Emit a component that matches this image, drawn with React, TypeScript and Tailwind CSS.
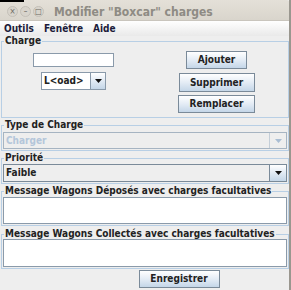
import * as React from "react";

const Arrow: React.FC<{ disabled?: boolean }> = ({ disabled }) => (
    <svg width="7" height="4" viewBox="0 0 7 4">
        <path d="M0 0h7L3.5 4z" fill={disabled ? "#a9bdd3" : "#111"} />
    </svg>
);

const Btn: React.FC<{ label: string; className: string }> = ({ label, className }) => (
    <button
        className={`flex shrink-0 items-center justify-center border border-[#7a8a99] bg-gradient-to-b from-white via-[#e4ecf5] to-[#c4d6e8] text-[10px] font-bold text-[#222] leading-none ${className}`}
    >
        {label}
    </button>
);

const Group: React.FC<{ title: string; className: string; children: React.ReactNode }> = ({ title, className, children }) => (
    <fieldset className={`mx-[1px] w-[288px] shrink-0 border border-[#b8cfe5] ${className}`}>
        <legend className="ml-[2px] whitespace-nowrap px-[1px] text-[10px] leading-[10px] font-bold text-[#222]">
            {title}
        </legend>
        {children}
    </fieldset>
);

export default function App() {
    return (
        <div className="relative flex h-[290px] w-[291px] flex-col overflow-hidden bg-[#eeeeee] font-['DejaVu_Sans_Condensed','DejaVu_Sans',sans-serif]">
            {/* window title bar */}
            <div className="relative flex h-[21px] shrink-0 items-center rounded-tr-[5px] border-b border-[#c9c5bd] bg-gradient-to-b from-[#e4e0d8] to-[#d9d5cc]">
                <div className="absolute left-0 top-0 h-[2px] w-[24px] bg-black" />
                <div className="ml-[7px] mt-[3px] flex gap-[2px]">
                    {["×", "–", "□"].map((g) => (
                        <div
                            key={g}
                            className="flex h-[11px] w-[11px] items-center justify-center rounded-full border border-[#c4c0b8] bg-[#d8d4cc] text-[8px] leading-none text-[#6a675f]"
                        >
                            {g}
                        </div>
                    ))}
                </div>
                <span className="ml-[10px] mt-[3px] text-[12px] font-bold text-[#8e8b84]">
                    Modifier "Boxcar" charges
                </span>
            </div>

            {/* menu bar */}
            <div className="flex h-[15px] shrink-0 items-center gap-[10px] bg-gradient-to-b from-white to-[#e9e9e9] pl-[4px] text-[10px] font-bold text-[#1c1c3a]">
                <span>Outils</span>
                <span>Fenêtre</span>
                <span>Aide</span>
            </div>

            <Group title="Charge" className="h-[82px]">
                <div className="grid grid-cols-2">
                    <div className="flex flex-col items-center pt-[7px]">
                        <div className="h-[14px] w-[81px] border border-[#8a9aaa] bg-white" />
                        <div className="mt-[5px] flex h-[18px] w-[65px] border border-[#8a9aaa] bg-white">
                            <span className="flex-1 pl-[2px] text-[10px] leading-[16px] font-bold text-[#222]">L&lt;oad&gt;</span>
                            <div className="flex w-[15px] items-center justify-center border-l border-[#8a9aaa] bg-gradient-to-b from-white to-[#c4d6e8]">
                                <Arrow />
                            </div>
                        </div>
                    </div>
                    <div className="flex flex-col items-center pt-[5px]">
                        <Btn label="Ajouter" className="h-[18px] w-[61px]" />
                        <Btn label="Supprimer" className="mt-[4px] h-[19px] w-[76px]" />
                        <Btn label="Remplacer" className="mt-[3px] h-[18px] w-[77px]" />
                    </div>
                </div>
            </Group>

            <Group title="Type de Charge" className="mt-[2px]">
                <div className="mx-[1px] mb-[1px] mt-[2px] flex h-[17px] border border-[#a6b4c2] bg-[#eeeeee]">
                    <span className="flex-1 pl-[2px] text-[10px] leading-[15px] font-bold text-[#b4c6da]">Charger</span>
                    <div className="flex w-[17px] items-center justify-center border-l border-[#c4ced8]">
                        <Arrow disabled />
                    </div>
                </div>
            </Group>

            <Group title="Priorité" className="mt-[2px]">
                <div className="mx-[1px] mb-[1px] mt-[1px] flex h-[18px] border border-[#7a8a99] bg-[#eeeeee]">
                    <span className="flex-1 pl-[2px] text-[10px] leading-[16px] font-bold text-[#222]">Faible</span>
                    <div className="flex w-[17px] items-center justify-center border-l border-[#7a8a99] bg-gradient-to-b from-white to-[#c4d6e8]">
                        <Arrow />
                    </div>
                </div>
            </Group>

            <Group title="Message Wagons Déposés avec charges facultatives" className="mt-[2px]">
                <div className="mx-[1px] mb-[1px] mt-[1px] h-[27px] border border-[#8a9aaa] bg-white" />
            </Group>

            <Group title="Message Wagons Collectés avec charges facultatives" className="mt-[3px]">
                <div className="mx-[1px] mb-[1px] h-[28px] border border-[#8a9aaa] bg-white" />
            </Group>

            <div className="mt-[1px] flex shrink-0 justify-center">
                <Btn label="Enregistrer" className="ml-[67px] h-[18px] w-[81px]" />
            </div>

            <div className="absolute right-0 top-0 h-full w-[2px] bg-[#9a978f]" />
        </div>
    );
}
